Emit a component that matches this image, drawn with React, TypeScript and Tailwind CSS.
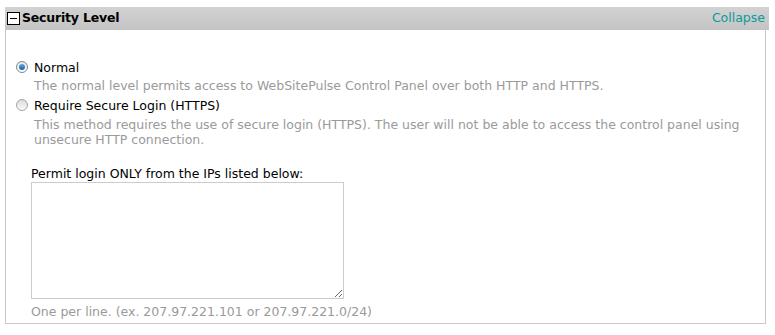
import React from "react";

export default function App() {
  return (
    <div className="w-[775px] h-[335px] bg-white pt-[7px] pl-[5px] pr-[6px]" style={{ fontFamily: '"DejaVu Sans", Verdana, sans-serif' }}>
      <div className="h-[23px] flex items-center justify-between bg-gradient-to-b from-[#d2d2d2] to-[#c4c4c4] pl-[2px] pr-[4px]">
        <div className="flex items-center gap-[2px]">
          <div className="w-[13px] h-[13px] border border-black bg-white flex items-center justify-center">
            <div className="w-[7px] h-[1px] bg-black" />
          </div>
          <span className="text-[12.5px] font-bold text-black leading-none tracking-[-0.2px]">Security Level</span>
        </div>
        <span className="text-[12.5px] text-[#0a9b9b] leading-none">Collapse</span>
      </div>
      <div className="border-l border-r border-b border-[#c8c8c8] mr-[3px] h-[294px] text-[12.5px] leading-[15px] pl-[10px] pt-[30px]">
        <div className="flex items-start gap-[6px]">
          <span className="mt-[1px] w-[12px] h-[12px] rounded-full border border-[#7a8a99] bg-gradient-to-b from-[#e6e6e6] to-white flex items-center justify-center shrink-0">
            <span className="w-[6px] h-[6px] rounded-full bg-gradient-to-b from-[#5fa8e8] to-[#1b5e9b]" />
          </span>
          <div>
            <div className="text-black">Normal</div>
            <div className="text-[#9a9a9a] mt-[3px]">The normal level permits access to WebSitePulse Control Panel over both HTTP and HTTPS.</div>
          </div>
        </div>
        <div className="flex items-start gap-[6px] mt-[5px]">
          <span className="mt-[1px] w-[12px] h-[12px] rounded-full border border-[#a5a5a5] bg-gradient-to-b from-[#dcdcdc] to-[#fafafa] shrink-0" />
          <div>
            <div className="text-black">Require Secure Login (HTTPS)</div>
            <div className="text-[#9a9a9a] mt-[4px] w-[720px]">This method requires the use of secure login (HTTPS). The user will not be able to access the control panel using unsecure HTTP connection.</div>
            <div className="text-black mt-[19px] -ml-[3px]">Permit login ONLY from the IPs listed below:</div>
            <textarea className="block -ml-[3px] mt-[1px] w-[313px] h-[117px] border border-[#cccccc] resize-y" />
            <div className="text-[#9a9a9a] mt-[5px] -ml-[3px]">One per line. (ex. 207.97.221.101 or 207.97.221.0/24)</div>
          </div>
        </div>
      </div>
    </div>
  );
}
